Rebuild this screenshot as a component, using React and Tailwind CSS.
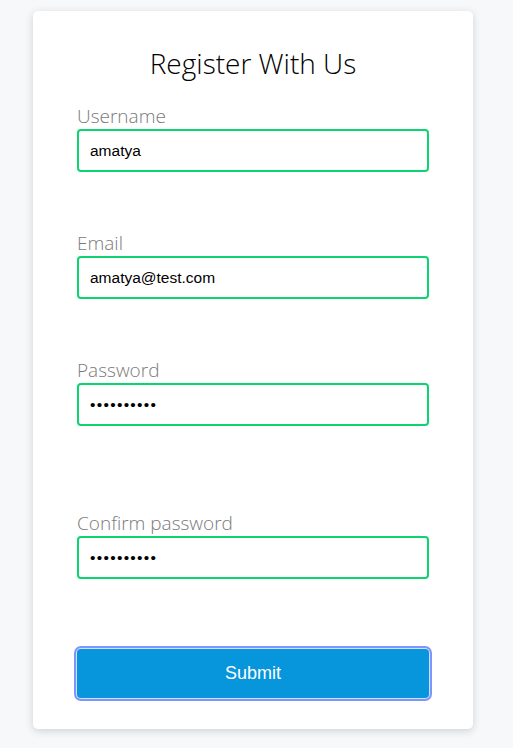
import React, { useState } from "react";

const Field = ({ label, type = "text", value, onChange, className = "" }) => (
  <div className={className}>
    <label className="block font-['Open_Sans',sans-serif] font-light text-[19px] leading-[25px] text-[#7a7a7a]">
      {label}
    </label>
    <input
      type={type}
      value={value}
      onChange={onChange}
      className={`block w-full h-[43px] px-[11px] border-2 border-[#0bd470] rounded-[4px] bg-white text-black font-['Liberation_Sans',Arial,sans-serif] text-[15.5px] outline-none ${
        type === "password" ? "tracking-[1.3px]" : ""
      }`}
    />
  </div>
);

const App = () => {
  const [form, setForm] = useState({
    username: "amatya",
    email: "amatya@test.com",
    password: "secret1234",
    confirm: "secret1234",
  });

  const set = (key) => (e) => setForm({ ...form, [key]: e.target.value });

  return (
    <div className="min-h-[748px] bg-[#f7f8fa] pt-[11px] pb-[19px]">
      <form
        className="ml-[33px] w-[440px] h-[718px] bg-white rounded-[5px] shadow-[0_2px_8px_rgba(0,0,0,0.16)] px-[44px] pt-[32px]"
        onSubmit={(e) => e.preventDefault()}
      >
        <h1 className="text-center font-['Open_Sans',sans-serif] font-light text-[28px] leading-[40px] text-black">
          Register With Us
        </h1>

        <Field className="mt-[21px]" label="Username" value={form.username} onChange={set("username")} />
        <Field className="mt-[59px]" label="Email" type="email" value={form.email} onChange={set("email")} />
        <Field className="mt-[59px]" label="Password" type="password" value={form.password} onChange={set("password")} />
        <Field className="mt-[85px]" label="Confirm password" type="password" value={form.confirm} onChange={set("confirm")} />

        <button
          type="submit"
          className="mt-[70px] block w-full h-[49px] rounded-[4px] bg-[#0796dc] text-white font-['Liberation_Sans',Arial,sans-serif] text-[18px] shadow-[0_0_0_1px_#d4dcff,0_0_0_3px_#7e96fb]"
        >
          Submit
        </button>
      </form>
    </div>
  );
};

export default App;
